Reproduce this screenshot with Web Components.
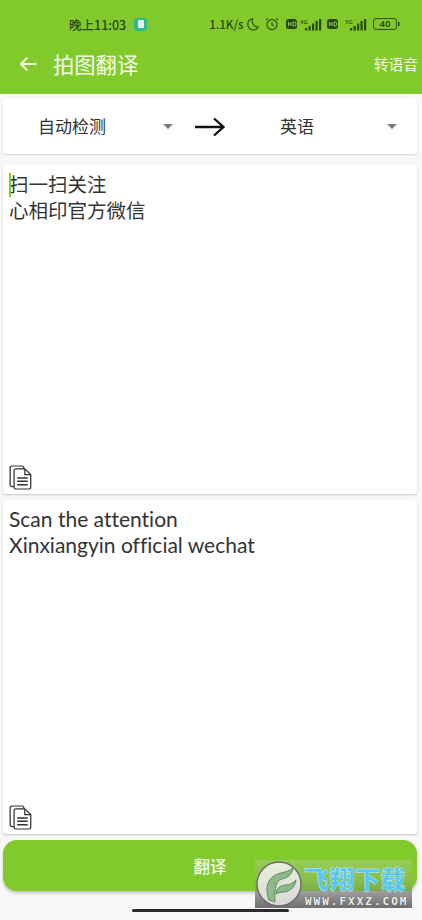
<!DOCTYPE html>
<html lang="zh">
<head>
<meta charset="utf-8">
<title>拍图翻译</title>
<style>
  html, body { margin: 0; padding: 0; }
  body { width: 422px; height: 920px; overflow: hidden; background: #f7f7f7; font-family: "Noto Sans CJK SC", "Noto Sans", sans-serif; }
</style>
</head>
<body>
<translate-app></translate-app>

<script>
(function () {
  const CJK = `"Noto Sans CJK SC", "Noto Sans", sans-serif`;

  const docIcon = `
    <svg width="23" height="25" viewBox="0 0 24 26" fill="none" stroke="#333" stroke-width="1.3">
      <path d="M5 22.5H3.2A2 2 0 0 1 1.2 20.5V3A2 2 0 0 1 3.2 1H13.5A2 2 0 0 1 15.5 3V4"/>
      <path d="M7 4H16.5L22.7 10V23.3A1.7 1.7 0 0 1 21 25H7A1.7 1.7 0 0 1 5.3 23.3V5.7A1.7 1.7 0 0 1 7 4Z"/>
      <path d="M16.5 4V10H22.7"/>
      <path d="M8.5 13.5H19.5M8.5 17H19.5M8.5 20.5H19.5" stroke-width="1.5"/>
    </svg>`;

  const hdIcon = `<svg width="11" height="10" viewBox="0 0 11 10"><rect width="11" height="10" rx="2.5" fill="#274a10"/><path d="M2.5 3V7M5 3V7M2.5 5H5M7 3V7H8A2 2 0 0 0 8 3Z" stroke="#a9d87a" stroke-width=".8" fill="none"/></svg>`;

  const signal = (label) => `<svg width="22" height="13" viewBox="0 0 22 13" fill="#274a10"><text x="0" y="5.5" font-size="6" font-family="Noto Sans">${label}</text><rect x="5" y="10" width="2.2" height="2.5"/><rect x="8.5" y="8" width="2.2" height="4.500"/><rect x="12" y="5.500" width="2.2" height="7"/><rect x="15.500" y="3" width="2.2" height="9.500"/><rect x="19" y="1" width="2.2" height="11.500"/></svg>`;

  class StatusBar extends HTMLElement {
    constructor() {
      super();
      this.attachShadow({ mode: 'open' });
      this.shadowRoot.innerHTML = `
        <style>
          :host { display: flex; align-items: center; height: 48px; color: #274a10; font: 500 11.5px ${CJK}; }
          .time { margin-left: 69px; font-size: 12.5px; }
          .app { margin-left: 8px; width: 13px; height: 13px; border-radius: 3px; background: #2dbb8f; display: flex; align-items: center; justify-content: center; }
          .app i { width: 6px; height: 8px; background: #e4f5e8; border-radius: 1px; }
          .right { margin-left: 62px; display: flex; align-items: center; }
          svg { display: block; flex: none; }
          .net { width: 34px; white-space: nowrap; }
          .moon { margin-left: 4px; }
          .alarm { margin-left: 6px; }
          .hd1, .sig2 { margin-left: 7px; }
          .sig1 { margin-left: 3px; }
          .hd2 { margin-left: 5px; }
          .batt { margin-left: 6px; }
          span.i { display: block; }
        </style>
        <span class="time">晚上11:03</span>
        <span class="app"><i></i></span>
        <div class="right">
          <span class="net">1.1K/s</span>
          <svg class="moon" width="12" height="13" viewBox="0 0 12 13" fill="none" stroke="#274a10" stroke-width="1.1"><path d="M5.500 .8A5.700 5.700 0 0 0 .8 6.500A5.400 5.400 0 0 0 6.300 12A5.400 5.400 0 0 0 11.300 9A6.200 6.200 0 0 1 5.500 .8Z"/></svg>
          <svg class="alarm" width="14" height="14" viewBox="0 0 14 14" fill="none" stroke="#274a10" stroke-width="1.1"><circle cx="7" cy="7.600" r="5"/><path d="M7 5V8L9 9M1 3.200L3 1.400M13 3.200L11 1.400"/></svg>
          <span class="i hd1">${hdIcon}</span>
          <span class="i sig1">${signal('4G')}</span>
          <span class="i hd2">${hdIcon}</span>
          <span class="i sig2">${signal('5G')}</span>
          <svg class="batt" width="27" height="12" viewBox="0 0 27 12" fill="none"><rect x=".6" y=".6" width="23" height="10.800" rx="2.500" stroke="#274a10" stroke-width="1"/><rect x="25" y="4" width="1.500" height="4" fill="#274a10"/><text x="12" y="9.300" text-anchor="middle" font-size="9.500" font-weight="600" font-family="Noto Sans" fill="#274a10">40</text></svg>
        </div>`;
    }
  }

  class AppHeader extends HTMLElement {
    constructor() {
      super();
      this.attachShadow({ mode: 'open' });
      this.shadowRoot.innerHTML = `
        <style>
          :host { display: block; height: 94px; background: #82c92c; box-sizing: border-box; }
          .bar { display: flex; align-items: center; height: 32px; margin-top: -1px; color: #f4fbe9; }
          .back { margin: 2px 0 0 19px; display: block; }
          .title { margin-left: 16px; font: 400 21.3px ${CJK}; }
          .action { margin-left: auto; margin-right: 4px; font: 400 14.700px ${CJK}; }
        </style>
        <status-bar></status-bar>
        <div class="bar">
          <svg class="back" width="18" height="16" viewBox="0 0 18 16" fill="none" stroke="#f4fbe9" stroke-width="2"><path d="M17.500 8H2M8.500 1.500L2 8L8.500 14.500"/></svg>
          <span class="title"><slot></slot></span>
          <span class="action"><slot name="action"></slot></span>
        </div>`;
    }
  }

  class LangPicker extends HTMLElement {
    constructor() {
      super();
      this.attachShadow({ mode: 'open' });
      this.shadowRoot.innerHTML = `
        <style>
          :host { display: flex; align-items: center; flex: none; color: #333; font: 400 17px ${CJK}; }
          .name { width: 138px; text-align: center; padding-bottom: 2px; }
          .caret { width: 0; height: 0; margin-left: var(--caret-gap, 20px); border-left: 5.500px solid transparent; border-right: 5.500px solid transparent; border-top: 5.500px solid #777; }
        </style>
        <span class="name"><slot></slot></span>
        <i class="caret"></i>`;
    }
  }

  class LangBar extends HTMLElement {
    constructor() {
      super();
      this.attachShadow({ mode: 'open' });
      this.shadowRoot.innerHTML = `
        <style>
          :host { display: flex; align-items: center; height: 55px; margin: 5px 5px 0 3px; background: #fff; border-radius: 3px; box-shadow: 0 1px 2px rgba(0,0,0,.14); box-sizing: border-box; }
          svg { display: block; margin: 0 3px 0 22px; flex: none; }
          .from { --caret-gap: 22px; }
          .to { --caret-gap: 21px; }
        </style>
        <lang-picker class="from">自动检测</lang-picker>
        <svg width="30" height="20" viewBox="0 0 30 20" fill="none" stroke="#111" stroke-width="2.300"><path d="M0 10H28.500M19 1.500L28.500 10L19 18.500"/></svg>
        <lang-picker class="to">英语</lang-picker>`;
    }
  }

  class TextPanel extends HTMLElement {
    constructor() {
      super();
      this.attachShadow({ mode: 'open' });
      this.shadowRoot.innerHTML = `
        <style>
          :host { display: flex; flex-direction: column; justify-content: space-between; margin: 0 5px 0 3px; padding: 6px 6px 4px 6px; background: #fff; border-radius: 3px; box-shadow: 0 1px 2px rgba(0,0,0,.2); box-sizing: border-box; }
          .text { position: relative; color: #333; font: 400 19.500px/26px ${CJK}; white-space: pre-line; }
          .cursor { display: none; position: absolute; left: 0; top: 2px; width: 2px; height: 24px; background: #82c92c; }
          :host([cursor]) .cursor { display: block; }
          svg { display: block; }
        </style>
        <div class="text"><i class="cursor"></i><slot></slot></div>
        ${docIcon}`;
    }
  }

  class ActionButton extends HTMLElement {
    constructor() {
      super();
      this.attachShadow({ mode: 'open' });
      this.shadowRoot.innerHTML = `
        <style>
          :host { display: flex; align-items: center; justify-content: center; height: 51px; margin: 6px 5px 0 3px; background: #82c92c; color: #f4fbe9; border-radius: 14px; box-shadow: 0 2px 3px rgba(0,0,0,.22); font: 500 16.500px ${CJK}; }
        </style>
        <slot></slot>`;
    }
  }

  class HomeBar extends HTMLElement {
    constructor() {
      super();
      this.attachShadow({ mode: 'open' });
      this.shadowRoot.innerHTML = `
        <style>
          :host { display: flex; justify-content: center; padding-top: 18px; }
          i { width: 157px; height: 3px; border-radius: 2px; background: #2a2a2a; margin-left: -1px; }
        </style>
        <i></i>`;
    }
  }

  class SiteWatermark extends HTMLElement {
    constructor() {
      super();
      this.attachShadow({ mode: 'open' });
      this.shadowRoot.innerHTML = `
        <style>
          :host { position: absolute; left: 255px; top: 860px; width: 157px; height: 48px; display: block; background: linear-gradient(#97cc56 0, #88bd4a 45%, #7cab48 64%, #a0a0a0 65%, #8a8a8a 80%, #6e6e6e 100%); }
          .logo { position: absolute; left: 1px; top: 1px; }
          .cn { position: absolute; left: 49px; top: 3px; color: #54c6ef; font: 900 25px/30px ${CJK}; letter-spacing: .5px; white-space: nowrap; -webkit-text-stroke: .4px #cdeefa; }
          .en { position: absolute; left: 50px; top: 35px; color: #efefef; font: 700 11px/13px "DejaVu Sans Mono", monospace; letter-spacing: 2px; white-space: nowrap; text-shadow: 0 0 1px #444; }
        </style>
        <svg class="logo" width="46" height="46" viewBox="0 0 46 46">
          <defs><linearGradient id="disc" x1="0" y1="0" x2="0" y2="1"><stop offset="0" stop-color="#e6f0d8"/><stop offset="1" stop-color="#d8d8d8"/></linearGradient></defs>
          <circle cx="23" cy="23" r="22" fill="url(#disc)" stroke="#6a6a6a" stroke-width="1.400"/>
          <path d="M13 39C8 26 12 15 25 12C30 11 33 10 37 7C36 14 31 17 26 18C20 19 18 28 19 41Z" fill="#8fb98a" stroke="#5d8a5a" stroke-width="1"/>
          <path d="M20 33C20 27 25 24 30 24C34 24 37 22 40 19C39 27 33 31 27 31C24 31 22 32 20 33Z" fill="#8fb98a" stroke="#5d8a5a" stroke-width="1"/>
        </svg>
        <span class="cn">飞翔下载</span>
        <span class="en">WWW.FXXZ.COM</span>`;
    }
  }

  class TranslateApp extends HTMLElement {
    constructor() {
      super();
      this.attachShadow({ mode: 'open' });
      this.shadowRoot.innerHTML = `
        <style>
          :host { display: block; width: 422px; height: 920px; position: relative; }
          .source { height: 329px; margin-top: 11px; }
          .result { height: 334px; margin-top: 6px; }
          .latin { font-family: "Lato", "Noto Sans", sans-serif; font-size: 21px; font-variant-ligatures: none; }
        </style>
        <app-header>拍图翻译<span slot="action">转语音</span></app-header>
        <lang-bar></lang-bar>
        <text-panel class="source" cursor>扫一扫关注
心相印官方微信</text-panel>
        <text-panel class="result"><span class="latin">Scan the attention
Xinxiangyin official wechat</span></text-panel>
        <action-button>翻译</action-button>
        <home-bar></home-bar>
        <site-watermark></site-watermark>`;
    }
  }

  customElements.define('status-bar', StatusBar);
  customElements.define('app-header', AppHeader);
  customElements.define('lang-picker', LangPicker);
  customElements.define('lang-bar', LangBar);
  customElements.define('text-panel', TextPanel);
  customElements.define('action-button', ActionButton);
  customElements.define('home-bar', HomeBar);
  customElements.define('site-watermark', SiteWatermark);
  customElements.define('translate-app', TranslateApp);
})();
</script>
</body>
</html>
